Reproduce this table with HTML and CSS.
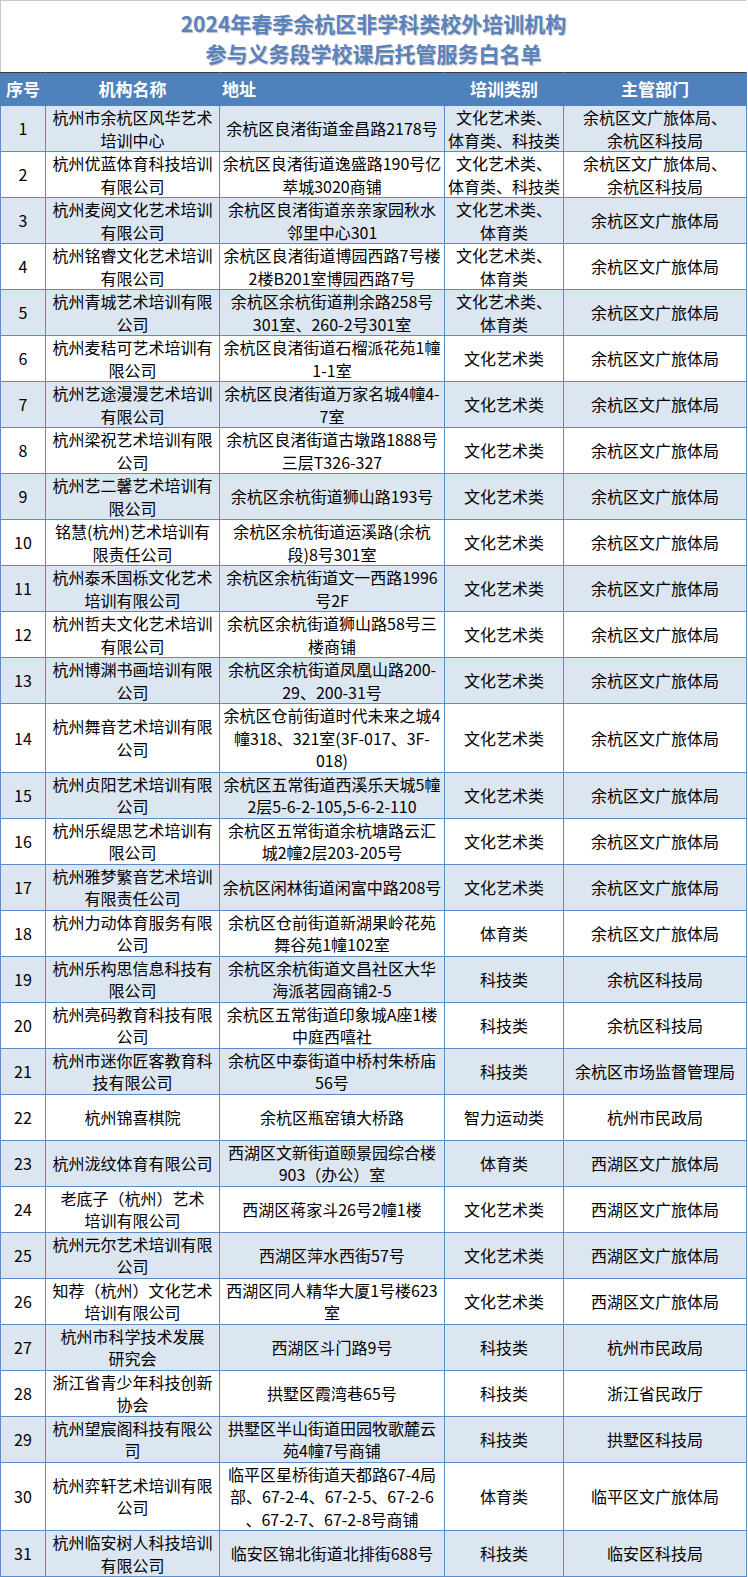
FILE: index.html
```html
<!DOCTYPE html>
<html lang="zh-CN">
<head>
<meta charset="utf-8">
<title>2024年春季余杭区非学科类校外培训机构参与义务段学校课后托管服务白名单</title>
<link rel="stylesheet" href="styles.css">
</head>
<body>
<div class="sheet">
  <div class="title">2024年春季余杭区非学科类校外培训机构<br>参与义务段学校课后托管服务白名单</div>
  <table class="list">
    <colgroup>
      <col class="c-no"><col class="c-name"><col class="c-addr"><col class="c-type"><col class="c-dept">
    </colgroup>
    <thead>
      <tr><th>序号</th><th>机构名称</th><th class="th-addr">地址</th><th>培训类别</th><th>主管部门</th></tr>
    </thead>
    <tbody>
      <tr><td>1</td><td>杭州市余杭区风华艺术<br>培训中心</td><td>余杭区良渚街道金昌路2178号</td><td>文化艺术类、<br>体育类、科技类</td><td>余杭区文广旅体局、<br>余杭区科技局</td></tr>
      <tr><td>2</td><td>杭州优蓝体育科技培训<br>有限公司</td><td>余杭区良渚街道逸盛路190号亿<br>萃城3020商铺</td><td>文化艺术类、<br>体育类、科技类</td><td>余杭区文广旅体局、<br>余杭区科技局</td></tr>
      <tr><td>3</td><td>杭州麦阅文化艺术培训<br>有限公司</td><td>余杭区良渚街道亲亲家园秋水<br>邻里中心301</td><td>文化艺术类、<br>体育类</td><td>余杭区文广旅体局</td></tr>
      <tr><td>4</td><td>杭州铭睿文化艺术培训<br>有限公司</td><td>余杭区良渚街道博园西路7号楼<br>2楼B201室博园西路7号</td><td>文化艺术类、<br>体育类</td><td>余杭区文广旅体局</td></tr>
      <tr><td>5</td><td>杭州青城艺术培训有限<br>公司</td><td>余杭区余杭街道荆余路258号<br>301室、260-2号301室</td><td>文化艺术类、<br>体育类</td><td>余杭区文广旅体局</td></tr>
      <tr><td>6</td><td>杭州麦秸可艺术培训有<br>限公司</td><td>余杭区良渚街道石榴派花苑1幢<br>1-1室</td><td>文化艺术类</td><td>余杭区文广旅体局</td></tr>
      <tr><td>7</td><td>杭州艺途漫漫艺术培训<br>有限公司</td><td>余杭区良渚街道万家名城4幢4-<br>7室</td><td>文化艺术类</td><td>余杭区文广旅体局</td></tr>
      <tr><td>8</td><td>杭州梁祝艺术培训有限<br>公司</td><td>余杭区良渚街道古墩路1888号<br>三层T326-327</td><td>文化艺术类</td><td>余杭区文广旅体局</td></tr>
      <tr><td>9</td><td>杭州艺二馨艺术培训有<br>限公司</td><td>余杭区余杭街道狮山路193号</td><td>文化艺术类</td><td>余杭区文广旅体局</td></tr>
      <tr><td>10</td><td>铭慧(杭州)艺术培训有<br>限责任公司</td><td>余杭区余杭街道运溪路(余杭<br>段)8号301室</td><td>文化艺术类</td><td>余杭区文广旅体局</td></tr>
      <tr><td>11</td><td>杭州泰禾国栎文化艺术<br>培训有限公司</td><td>余杭区余杭街道文一西路1996<br>号2F</td><td>文化艺术类</td><td>余杭区文广旅体局</td></tr>
      <tr><td>12</td><td>杭州哲夫文化艺术培训<br>有限公司</td><td>余杭区余杭街道狮山路58号三<br>楼商铺</td><td>文化艺术类</td><td>余杭区文广旅体局</td></tr>
      <tr><td>13</td><td>杭州博渊书画培训有限<br>公司</td><td>余杭区余杭街道凤凰山路200-<br>29、200-31号</td><td>文化艺术类</td><td>余杭区文广旅体局</td></tr>
      <tr><td>14</td><td>杭州舞音艺术培训有限<br>公司</td><td>余杭区仓前街道时代未来之城4<br>幢318、321室(3F-017、3F-<br>018)</td><td>文化艺术类</td><td>余杭区文广旅体局</td></tr>
      <tr><td>15</td><td>杭州贞阳艺术培训有限<br>公司</td><td>余杭区五常街道西溪乐天城5幢<br>2层5-6-2-105,5-6-2-110</td><td>文化艺术类</td><td>余杭区文广旅体局</td></tr>
      <tr><td>16</td><td>杭州乐缇思艺术培训有<br>限公司</td><td>余杭区五常街道余杭塘路云汇<br>城2幢2层203-205号</td><td>文化艺术类</td><td>余杭区文广旅体局</td></tr>
      <tr><td>17</td><td>杭州雅梦繁音艺术培训<br>有限责任公司</td><td>余杭区闲林街道闲富中路208号</td><td>文化艺术类</td><td>余杭区文广旅体局</td></tr>
      <tr><td>18</td><td>杭州力动体育服务有限<br>公司</td><td>余杭区仓前街道新湖果岭花苑<br>舞谷苑1幢102室</td><td>体育类</td><td>余杭区文广旅体局</td></tr>
      <tr><td>19</td><td>杭州乐构思信息科技有<br>限公司</td><td>余杭区余杭街道文昌社区大华<br>海派茗园商铺2-5</td><td>科技类</td><td>余杭区科技局</td></tr>
      <tr><td>20</td><td>杭州亮码教育科技有限<br>公司</td><td>余杭区五常街道印象城A座1楼<br>中庭西嘻社</td><td>科技类</td><td>余杭区科技局</td></tr>
      <tr><td>21</td><td>杭州市迷你匠客教育科<br>技有限公司</td><td>余杭区中泰街道中桥村朱桥庙<br>56号</td><td>科技类</td><td>余杭区市场监督管理局</td></tr>
      <tr><td>22</td><td>杭州锦喜棋院</td><td>余杭区瓶窑镇大桥路</td><td>智力运动类</td><td>杭州市民政局</td></tr>
      <tr><td>23</td><td>杭州泷纹体育有限公司</td><td>西湖区文新街道颐景园综合楼<br>903（办公）室</td><td>体育类</td><td>西湖区文广旅体局</td></tr>
      <tr><td>24</td><td>老底子（杭州）艺术<br>培训有限公司</td><td>西湖区蒋家斗26号2幢1楼</td><td>文化艺术类</td><td>西湖区文广旅体局</td></tr>
      <tr><td>25</td><td>杭州元尔艺术培训有限<br>公司</td><td>西湖区萍水西街57号</td><td>文化艺术类</td><td>西湖区文广旅体局</td></tr>
      <tr><td>26</td><td>知荐（杭州）文化艺术<br>培训有限公司</td><td>西湖区同人精华大厦1号楼623<br>室</td><td>文化艺术类</td><td>西湖区文广旅体局</td></tr>
      <tr><td>27</td><td>杭州市科学技术发展<br>研究会</td><td>西湖区斗门路9号</td><td>科技类</td><td>杭州市民政局</td></tr>
      <tr><td>28</td><td>浙江省青少年科技创新<br>协会</td><td>拱墅区霞湾巷65号</td><td>科技类</td><td>浙江省民政厅</td></tr>
      <tr><td>29</td><td>杭州望宸阁科技有限公<br>司</td><td>拱墅区半山街道田园牧歌麓云<br>苑4幢7号商铺</td><td>科技类</td><td>拱墅区科技局</td></tr>
      <tr><td>30</td><td>杭州弈轩艺术培训有限<br>公司</td><td>临平区星桥街道天都路67-4局<br>部、67-2-4、67-2-5、67-2-6<br>、67-2-7、67-2-8号商铺</td><td>体育类</td><td>临平区文广旅体局</td></tr>
      <tr><td>31</td><td>杭州临安树人科技培训<br>有限公司</td><td>临安区锦北街道北排街688号</td><td>科技类</td><td>临安区科技局</td></tr>
    </tbody>
  </table>
</div>
</body>
</html>
```

FILE: styles.css
```css
html, body {
  margin: 0;
  padding: 0;
  background: #ffffff;
}

body {
  font-family: "Noto Sans CJK SC", "Noto Sans", sans-serif;
  color: #000000;
}

.sheet {
  width: 746px;
}

.title {
  box-sizing: border-box;
  height: 72px;
  padding-top: 7px;
  border-left: 1px solid #c8c8c8;
  border-top: 1px solid #c8c8c8;
  text-align: center;
  font-size: 21px;
  font-weight: 700;
  line-height: 30px;
  color: #5a82be;
  text-shadow: 1px 1px 1px rgba(70, 70, 70, 0.35);
}

.list {
  width: 746px;
  border-collapse: collapse;
  table-layout: fixed;
  font-size: 16px;
  line-height: 22.5px;
}

.c-no { width: 45px; }
.c-name { width: 174px; }
.c-addr { width: 225px; }
.c-type { width: 119px; }
.c-dept { width: 183px; }

.list th {
  height: 32px;
  padding: 0;
  background: #4f81bd;
  color: #ffffff;
  font-size: 17px;
  font-weight: 700;
  text-align: center;
  border: 1px solid #4f81bd;
  border-top: 1px solid #3c3c3c;
  white-space: nowrap;
}

.list th.th-addr {
  text-align: left;
  padding-left: 2px;
}

.list tbody tr {
  height: 46px;
}

.list td {
  padding: 0;
  border: 1px solid #5b8bc8;
  text-align: center;
  vertical-align: middle;
  white-space: nowrap;
  overflow: hidden;
}

.list tbody tr:nth-child(odd) td {
  background: #dce6f1;
}
```
